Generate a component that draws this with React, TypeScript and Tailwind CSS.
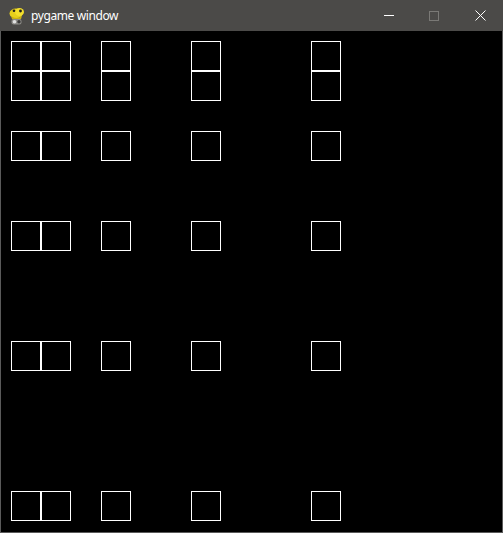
import React from "react";

function Cell() {
  return <div className="w-[30px] h-[30px] border border-white box-border" />;
}

function Block({ cols, rows }: { cols: number; rows: number }) {
  return (
    <div className="flex flex-col">
      {Array.from({ length: rows }).map((_, r) => (
        <div key={r} className="flex">
          {Array.from({ length: cols }).map((_, c) => (
            <Cell key={c} />
          ))}
        </div>
      ))}
    </div>
  );
}

function Row({ rows, className }: { rows: number; className: string }) {
  return (
    <div className={className}>
      <div className="ml-[10px]">
        <Block cols={2} rows={rows} />
      </div>
      <div className="ml-[30px]">
        <Block cols={1} rows={rows} />
      </div>
      <div className="ml-[60px]">
        <Block cols={1} rows={rows} />
      </div>
      <div className="ml-[90px]">
        <Block cols={1} rows={rows} />
      </div>
    </div>
  );
}

function PygameIcon() {
  return (
    <svg width="17" height="18" viewBox="0 0 17 18">
      <ellipse cx="8" cy="6.5" rx="6.5" ry="5" fill="#e6cf1c" />
      <ellipse cx="11.5" cy="5" rx="4.5" ry="4" fill="#f3df2c" />
      <circle cx="12.5" cy="4" r="1.4" fill="#1e1e1e" />
      <circle cx="6" cy="3.8" r="1.3" fill="#1e1e1e" />
      <path d="M3 9 Q8 13 14 9 L13 12 Q8 14 4 12 Z" fill="#c9b114" />
      <rect x="3.5" y="12" width="10" height="5.5" rx="2" fill="#8d8c88" />
      <circle cx="6.5" cy="14.8" r="1.8" fill="#e2e2e2" />
      <circle cx="11" cy="14.8" r="1.7" fill="#3a3938" />
    </svg>
  );
}

export default function App() {
  return (
    <div className="w-[503px] h-[533px] bg-[#5a5a5a] flex flex-col overflow-hidden">
      <div className="h-[31px] bg-[#4b4a48] flex items-center shrink-0">
        <div className="ml-[8px] flex items-center">
          <PygameIcon />
        </div>
        <span
          className="ml-[6px] text-[12px] text-white leading-none tracking-[-0.4px]"
          style={{ fontFamily: '"Noto Sans", "Open Sans", sans-serif' }}
        >
          pygame window
        </span>
        <div className="flex-1" />
        <div className="w-[46px] h-[31px] flex items-center justify-center">
          <div className="w-[10px] h-[1px] bg-white" />
        </div>
        <div className="w-[46px] h-[31px] flex items-center justify-center ml-[-1px]">
          <div className="w-[10px] h-[10px] border border-[#7a7976]" />
        </div>
        <div className="w-[46px] h-[31px] flex items-center justify-center">
          <svg width="11" height="11" viewBox="0 0 11 11">
            <path d="M0.5 0.5 L10.5 10.5 M10.5 0.5 L0.5 10.5" stroke="#fff" strokeWidth="1" />
          </svg>
        </div>
      </div>
      <div className="flex-1 mx-[1px] mb-[1px] bg-black flex flex-col">
        <Row rows={2} className="flex mt-[10px]" />
        <Row rows={1} className="flex mt-[30px]" />
        <Row rows={1} className="flex mt-[60px]" />
        <Row rows={1} className="flex mt-[90px]" />
        <Row rows={1} className="flex mt-[120px]" />
      </div>
    </div>
  );
}
